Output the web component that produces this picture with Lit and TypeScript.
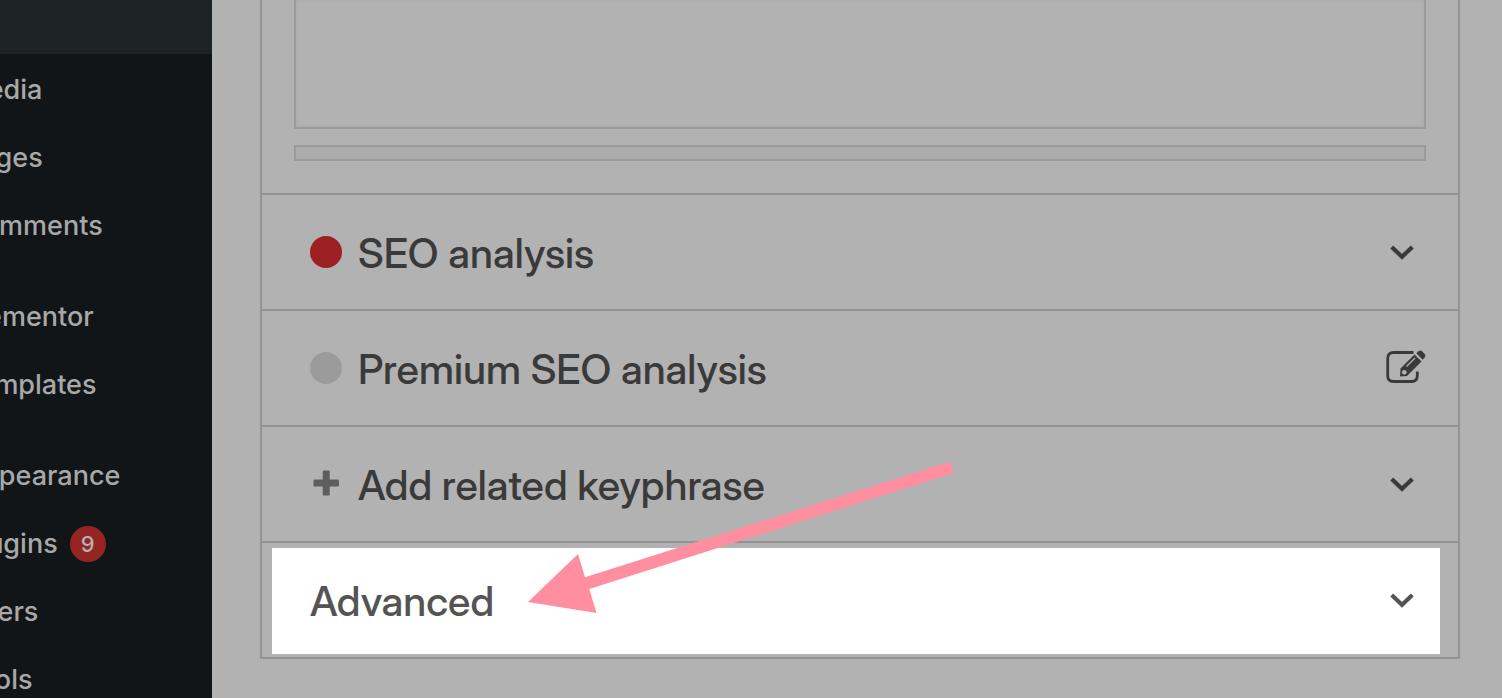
import { LitElement, html, css, svg, nothing } from "lit";
import { customElement, property, state } from "lit/decorators.js";
import { classMap } from "lit/directives/class-map.js";

interface MenuEntry {
  label: string;
  count?: number;
  startsGroup?: boolean;
}

const MENU: MenuEntry[] = [
  { label: "Media" },
  { label: "Pages" },
  { label: "Comments" },
  { label: "Elementor", startsGroup: true },
  { label: "Templates" },
  { label: "Appearance", startsGroup: true },
  { label: "Plugins", count: 9 },
  { label: "Users" },
  { label: "Tools" },
];

@customElement("admin-menu")
export class AdminMenu extends LitElement {
  static styles = css`
    :host {
      display: block;
      overflow: hidden;
      background: #111517;
    }
    .current {
      height: 54px;
      background: #1d2224;
    }
    .list {
      list-style: none;
      margin: 0 0 0 -37px;
      padding: 2px 0 0;
    }
    .item {
      height: 68px;
    }
    .group {
      margin-top: 23px;
    }
    .link {
      display: flex;
      align-items: center;
      gap: 12px;
      height: 68px;
      color: #a8a8a9;
      font-size: 27px;
      font-weight: 450;
      line-height: 36px;
      text-decoration: none;
      white-space: nowrap;
    }
    .count {
      display: grid;
      place-items: center;
      width: 36px;
      height: 36px;
      border-radius: 50%;
      background: #962424;
      color: #b3b3b3;
      font-size: 22px;
      font-weight: 500;
    }
  `;

  render() {
    return html`
      <nav aria-label="Main menu">
        <div class="current"></div>
        <ul class="list">
          ${MENU.map(
            (m) => html`<li class=${classMap({ item: true, group: !!m.startsGroup })}>
              <a class="link" href="#"
                >${m.label}${m.count ? html`<span class="count">${m.count}</span>` : nothing}</a
              >
            </li>`
          )}
        </ul>
      </nav>
    `;
  }
}

const chevron = svg`<path d="M5.700 15 L16 24.800 L26.300 15" fill="none" stroke="currentColor" stroke-width="4.200" />`;

const edit = svg`
  <path d="M27.500 4.500 H7.500 Q1.700 4.500 1.700 10.300 V27.700 Q1.700 33.500 7.500 33.500 H25.500 Q31.300 33.500 31.300 27.700 V23.500" fill="none" stroke="currentColor" stroke-width="2.800" />
  <path d="M14.500 20.500 L28.500 6.500 L35.500 13.500 L21 28 L14 28.500 Z" fill="currentColor" />
  <path d="M30 5.500 L32.500 3.200 Q34.500 1.800 36.300 3.500 L38.900 6.200 Q40 7.800 38.700 9.500 L36.500 12 Z" fill="currentColor" />
  <path d="M20.500 18.500 L29 10" stroke="#b2b2b2" stroke-width="1.200" />
  <path d="M29 5 L37 13" stroke="#b2b2b2" stroke-width="1.200" />
  <circle cx="18.300" cy="24.300" r="2.300" fill="#b2b2b2" />`;

@customElement("panel-row")
export class PanelRow extends LitElement {
  @property() label = "";
  @property() lead: "bad" | "idle" | "plus" | "" = "";
  @property() action: "chevron" | "edit" = "chevron";
  @property({ type: Boolean, reflect: true }) spotlight = false;
  @state() private open = false;

  static styles = css`
    :host {
      display: flex;
      position: relative;
      border-top: 2px solid #939393;
    }
    .row {
      display: flex;
      align-items: center;
      flex: 1;
      min-width: 0;
      height: 114px;
      gap: 16px;
      margin: 0;
      padding: 0 32px 0 48px;
      border: 0;
      background: none;
      color: #3a3a3a;
      font-family: "Inter Display", Inter, "Liberation Sans", sans-serif;
      font-size: 41px;
      font-weight: 500;
      line-height: 48px;
      text-align: left;
      cursor: pointer;
    }
    :host([spotlight]) .row {
      height: 106px;
      margin: 5px 18px 3px 10px;
      padding: 0 14px 2px 38px;
      background: #fff;
      color: #545454;
    }
    .lead {
      display: grid;
      place-items: center;
      width: 32px;
      height: 32px;
      border-radius: 50%;
    }
    .bad {
      background: #9c2022;
    }
    .idle {
      background: #9b9b9b;
    }
    .plus {
      color: #5e5e5e;
    }
    .label {
      flex: 1;
      min-width: 0;
      padding-top: 2px;
    }
    .action {
      flex: none;
      width: 40px;
      height: 40px;
    }
    .arrow {
      position: absolute;
      left: 266px;
      top: -82px;
      width: 426px;
      height: 153px;
      pointer-events: none;
    }
  `;

  render() {
    return html`
      <button class="row" type="button" aria-expanded=${this.open} @click=${() => (this.open = !this.open)}>
        ${this.lead
          ? html`<span class=${"lead " + this.lead}
              >${this.lead === "plus"
                ? html`<svg width="32" height="32" viewBox="0 0 32 32" aria-hidden="true">
                    <g fill="currentColor">
                      <rect x="12.700" y="2.500" width="7" height="25" rx="1.200" />
                      <rect x="3.500" y="11.500" width="25.500" height="7" rx="1.200" />
                    </g>
                  </svg>`
                : nothing}</span
            >`
          : nothing}
        <span class="label">${this.label}</span>
        <svg class="action" viewBox="0 0 40 40" aria-hidden="true">${this.action === "edit" ? edit : chevron}</svg>
      </button>
      ${this.spotlight
        ? html`<svg class="arrow" viewBox="528 461 426 153" aria-hidden="true">
            <path d="M528 602 L578 554 L585 577.300 L950 461.700 L953.500 473 L589.300 589 L596.500 613 Z" fill="#ff8ea0" />
          </svg>`
        : nothing}
    `;
  }
}

@customElement("app-root")
export class AppRoot extends LitElement {
  static styles = css`
    :host {
      display: grid;
      grid-template-columns: 212px minmax(0, 1fr);
      height: 100vh;
      overflow: hidden;
      background: #b2b2b2;
      font-family: Inter, "Liberation Sans", sans-serif;
    }
    .main {
      padding: 0 42px 39px 48px;
    }
    .panel {
      border: 2px solid #939393;
      border-top: 0;
    }
    .fields {
      display: flex;
      flex-direction: column;
      gap: 16px;
      padding: 0 32px 32px;
    }
    .text {
      display: block;
      box-sizing: border-box;
      width: 100%;
      height: 129px;
      border: 2px solid #9b9b9b;
      border-top: 0;
      outline: 0;
      resize: none;
      background: #b2b2b2;
      box-shadow: inset 0 0 4px rgba(0, 0, 0, 0.05);
      font: inherit;
    }
    .meter {
      box-sizing: border-box;
      height: 16px;
      border: 2px solid #9b9b9b;
      background: #acacac;
    }
  `;

  render() {
    return html`
      <admin-menu></admin-menu>
      <main class="main">
        <section class="panel">
          <div class="fields">
            <textarea class="text" aria-label="Meta description"></textarea>
            <div class="meter"></div>
          </div>
          <panel-row label="SEO analysis" lead="bad"></panel-row>
          <panel-row label="Premium SEO analysis" lead="idle" action="edit"></panel-row>
          <panel-row label="Add related keyphrase" lead="plus"></panel-row>
          <panel-row label="Advanced" spotlight></panel-row>
        </section>
      </main>
    `;
  }
}
